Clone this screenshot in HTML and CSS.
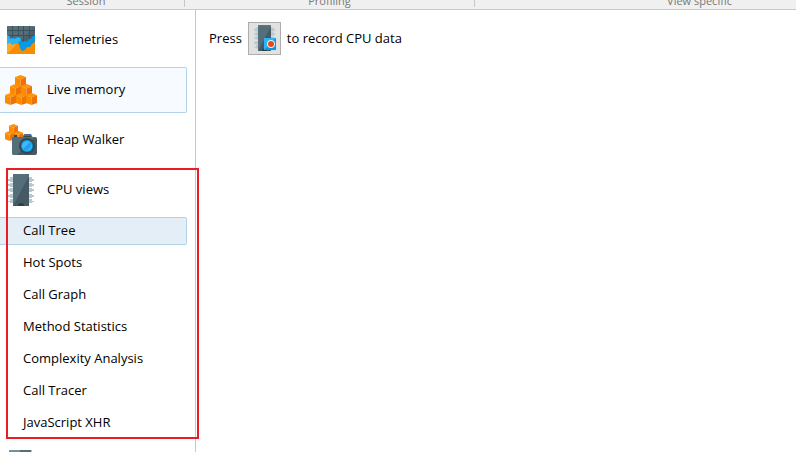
FILE: index.html
```html
<!DOCTYPE html>
<html lang="en">
<head>
<meta charset="utf-8">
<title>CPU views</title>
<link rel="stylesheet" href="styles.css">
</head>
<body>
<svg class="defs" aria-hidden="true">
  <symbol id="cube" viewBox="0 0 11 12">
    <path fill="#ff9208" d="M0 2 5.500 0 11 2 5.500 4.500z"/>
    <path fill="#fb8c00" d="M0 2 5.500 4.500V12L0 10z"/>
    <path fill="#ef7208" d="M11 2 5.500 4.500V12L11 10z"/>
  </symbol>
  <symbol id="chip" viewBox="0 0 26 32">
    <path fill="#b9c8d0" d="M2 3h22v2h2v2h-2v1H2V7H0V5h2zM2 9h22v1h2v2h-2v1H2v-1H0v-2h2zM2 14h22v1h2v2h-2v1H2v-1H0v-2h2zM2 20h22v1h2v2h-2v1H2v-1H0v-2h2zM2 25h22v2h2v1h-2v1H2v-1H0v-1h2z"/>
    <path fill="#546e7a" d="M5 0h16v32H5z"/>
    <path fill="#455a64" d="M21 2v30H5z"/>
    <path fill="#2b3c45" d="M10 32a3 3 0 0 1 6 0z"/>
  </symbol>
</svg>
<header class="ribbon">
  <div class="group session">Session</div>
  <div class="group profiling">Profiling</div>
  <div class="group specific">View specific</div>
</header>
<div class="workspace">
  <nav class="sidebar">
    <a class="item" href="#">
      <svg class="icon" viewBox="0 0 32 32"><clipPath id="tile"><rect x="2" y="2" width="28" height="28" rx="1"/></clipPath><g clip-path="url(#tile)">
        <path fill="#4b626d" d="M2 2h28v28H2z"/><path fill="#546e7a" d="M2 2h28L2 30z"/>
        <path stroke="#3c505a" fill="none" d="M7.500 2v16M13.500 2v16M18.500 2v16M24.500 2v16M2 6.500h28M2 11.500h28"/>
        <path fill="#039be5" d="M2 11l2 1 1 3 3-1 2 1 3-2 2 1 2 4 3-1 2 1 2-3 2 0 2-3 2-1v19H2z"/>
        <path fill="#29b6f6" d="M2 11l2 1 1 3 3-1 2 1 3-2 2 1 1 2L9 23H2z"/>
        <path fill="#fb8c00" d="M2 20l3-1 2 2 3-1 2-1 2 1 1 4 2 3 3-1 2-3 3 0 2-3 3-2v12H2z"/>
        <path fill="#ffa726" d="M2 20l3-1 2 2 3-1 1 1-9 9z"/></g></svg>
      <span>Telemetries</span>
    </a>
    <a class="item hovered" href="#">
      <svg class="icon" viewBox="0 0 32 32"><use href="#cube" x="10" y="1" width="11" height="12"/><use href="#cube" x="5" y="10" width="11" height="12"/><use href="#cube" x="16" y="10" width="11" height="12"/><use href="#cube" x="0" y="19" width="11" height="12"/><use href="#cube" x="11" y="19" width="11" height="12"/><use href="#cube" x="21" y="19" width="11" height="12"/></svg>
      <span>Live memory</span>
    </a>
    <a class="item" href="#">
      <svg class="icon" viewBox="0 0 32 32"><use href="#cube" x="4" y="0" width="9" height="10"/><use href="#cube" x="0" y="7" width="9" height="10"/><use href="#cube" x="9" y="7" width="9" height="10"/>
        <path fill="#37474f" d="M9 11h3v3H9z"/><path fill="#546e7a" d="M17 14l2-4h7l2 4z"/><path fill="#37474f" d="M19 12h7v2h-7z"/>
        <rect x="7" y="13" width="25" height="18" rx="2" fill="#455a64"/><path fill="#546e7a" d="M9 13h21L12 31H9q-2 0-2-2V15q0-2 2-2z"/>
        <circle cx="22" cy="22" r="8" fill="#37474f"/><circle cx="22" cy="22" r="6" fill="#039be5"/><circle cx="22" cy="22" r="5" fill="#42b8f8"/><path fill="#1e9ff0" d="M25 18a5 5 0 0 1-7 7z"/></svg>
      <span>Heap Walker</span>
    </a>
    <section class="cpu">
      <a class="item" href="#">
        <svg class="icon" viewBox="0 0 32 32"><use href="#chip" x="3" y="0" width="26" height="32"/></svg>
        <span>CPU views</span>
      </a>
      <a class="view selected" href="#">Call Tree</a>
      <a class="view" href="#">Hot Spots</a>
      <a class="view" href="#">Call Graph</a>
      <a class="view" href="#">Method Statistics</a>
      <a class="view" href="#">Complexity Analysis</a>
      <a class="view" href="#">Call Tracer</a>
      <a class="view" href="#">JavaScript XHR</a>
    </section>
    <a class="item" href="#" aria-label="Next section">
      <svg class="icon" viewBox="0 0 32 32"><path fill="#78909c" d="M4 2h11v28H4z"/><path fill="#546e7a" d="M15 2h11v28H15z"/><path fill="#b4c4cd" d="M26 2h1v28h-1z"/></svg>
    </a>
  </nav>
  <main class="content">
    <p class="prompt">
      <span>Press</span>
      <button class="record" type="button" aria-label="Record CPU data">
        <svg class="record-icon" viewBox="0 0 31 31"><use href="#chip" x="5" y="2" width="21" height="26"/><path fill="#29b6f6" d="M15 15h12v12H15z"/><path fill="#039be5" d="M27 15v12H15z"/><circle cx="22" cy="21" r="4" fill="#eceff1"/><circle cx="22" cy="21" r="3" fill="#e64a19"/></svg>
      </button>
      <span>to record CPU data</span>
    </p>
  </main>
</div>
</body>
</html>
```

FILE: styles.css
```css
* { box-sizing: border-box; }

body {
  margin: 0;
  height: 100vh;
  overflow: hidden;
  display: flex;
  flex-direction: column;
  background: #fff;
  color: #000;
  font: 13px/18px "Open Sans", "Noto Sans", sans-serif;
}

.defs { display: none; }

.ribbon {
  flex: none;
  display: flex;
  height: 10px;
  overflow: hidden;
  padding-bottom: 2px;
  background: #f0f0f0;
  border-bottom: 1px solid #c8c8c8;
  color: #777;
  font-size: 11px;
  line-height: 12px;
}

.group {
  flex: none;
  display: flex;
  align-items: flex-end;
  justify-content: center;
  border-right: 1px solid #c8c8c8;
}

.session { width: 185px; padding-right: 12px; }
.profiling { width: 290px; }
.specific { width: 450px; }

.workspace {
  flex: 1;
  min-height: 0;
  display: flex;
}

.sidebar {
  flex: none;
  width: 196px;
  padding: 7px 8px 0 0;
  border-right: 1px solid #c8c8c8;
}

.item,
.view {
  display: flex;
  align-items: center;
  margin-bottom: 4px;
  border: 1px solid transparent;
  border-left: 0;
  border-radius: 0 2px 2px 0;
  color: inherit;
  text-decoration: none;
}

.item {
  height: 46px;
  gap: 10px;
  padding-left: 5px;
}

.view {
  height: 28px;
  padding: 0 0 2px 23px;
}

.item span,
.prompt span { padding-bottom: 2px; }

.hovered { background: #f7fbff; border-color: #b2d3e6; }
.selected { background: #e4eef7; border-color: #b2d3e6; }

.icon { flex: none; width: 32px; height: 32px; }

.cpu { position: relative; }

.cpu::after {
  content: "";
  position: absolute;
  inset: 1px -12px -2px 6px;
  border: 2px solid #ed1c24;
  pointer-events: none;
}

.content { flex: 1; padding: 12px 13px; }

.prompt {
  display: flex;
  align-items: center;
  gap: 6px;
  margin: 0;
}

.record {
  width: 33px;
  height: 33px;
  padding: 0;
  border: 1px solid #adadad;
  background: #e1e1e1;
}

.record-icon { display: block; width: 31px; height: 31px; }
```
